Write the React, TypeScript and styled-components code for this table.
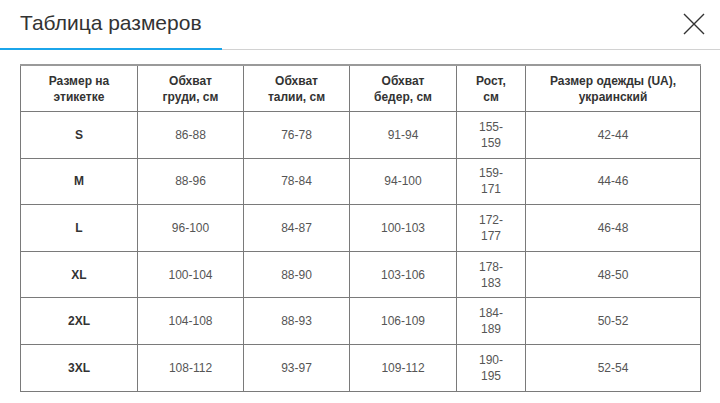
import React from "react";
import styled, { createGlobalStyle } from "styled-components";

const Global = createGlobalStyle`
  html, body { margin: 0; padding: 0; background: #fff; }
  body { font-family: "Liberation Sans", Arial, sans-serif; }
`;

const Page = styled.div`
  width: 720px;
  height: 403px;
  overflow: hidden;
  background: #fff;
`;

const Header = styled.div`
  display: flex;
  align-items: stretch;
  justify-content: space-between;
  height: 50px;
  border-bottom: 1px solid #d2d2d2;
  box-sizing: border-box;
`;

const Tab = styled.div`
  width: 222px;
  box-sizing: border-box;
  padding-left: 20px;
  padding-top: 11px;
  font-size: 21px;
  color: #333;
  border-bottom: 2px solid #1ba5ea;
  margin-bottom: -1px;
`;

const Close = styled.button`
  border: 0;
  background: transparent;
  padding: 0;
  margin: 13px 15px 0 0;
  width: 22px;
  height: 22px;
  cursor: pointer;
  display: flex;
`;

const Body = styled.div`
  padding: 14px 0 0 20px;
`;

const Table = styled.table`
  border-collapse: collapse;
  table-layout: fixed;
  width: 680px;
  border-top: 2px solid #9a9a9a;
`;

const Th = styled.th`
  border: 1.5px solid #7a7a7a;
  font-size: 12px;
  line-height: 16px;
  font-weight: bold;
  color: #333;
  text-align: center;
  vertical-align: middle;
  padding: 0 6px;
  height: 45px;
`;

const Td = styled.td<{ $bold?: boolean }>`
  border: 1.5px solid #7a7a7a;
  font-size: 12px;
  line-height: 16px;
  font-weight: ${(p) => (p.$bold ? "bold" : "normal")};
  color: ${(p) => (p.$bold ? "#333" : "#555")};
  text-align: center;
  vertical-align: middle;
  padding: 0 6px;
  height: 45.6px;
`;

const Narrow = styled.span`
  display: inline-block;
  max-width: 32px;
`;

const widths = [117, 106, 106, 107, 69, 175];
const headers = [
  ["Размер на", "этикетке"],
  ["Обхват", "груди, см"],
  ["Обхват", "талии, см"],
  ["Обхват", "бедер, см"],
  ["Рост,", "см"],
  ["Размер одежды (UA),", "украинский"],
];

const rows = [
  ["S", "86-88", "76-78", "91-94", "155-159", "42-44"],
  ["M", "88-96", "78-84", "94-100", "159-171", "44-46"],
  ["L", "96-100", "84-87", "100-103", "172-177", "46-48"],
  ["XL", "100-104", "88-90", "103-106", "178-183", "48-50"],
  ["2XL", "104-108", "88-93", "106-109", "184-189", "50-52"],
  ["3XL", "108-112", "93-97", "109-112", "190-195", "52-54"],
];

export default function App() {
  return (
    <Page>
      <Global />
      <Header>
        <Tab>Таблица размеров</Tab>
        <Close aria-label="close">
          <svg width="22" height="22" viewBox="0 0 22 22">
            <path d="M1 1L21 21M21 1L1 21" stroke="#333" strokeWidth="1.4" fill="none" />
          </svg>
        </Close>
      </Header>
      <Body>
        <Table>
          <colgroup>
            {widths.map((w, i) => (
              <col key={i} style={{ width: w }} />
            ))}
          </colgroup>
          <thead>
            <tr>
              {headers.map((h, i) => (
                <Th key={i}>
                  {h[0]}
                  <br />
                  {h[1]}
                </Th>
              ))}
            </tr>
          </thead>
          <tbody>
            {rows.map((r, ri) => (
              <tr key={ri}>
                {r.map((c, ci) => (
                  <Td key={ci} $bold={ci === 0}>
                    {ci === 4 ? <Narrow>{c}</Narrow> : c}
                  </Td>
                ))}
              </tr>
            ))}
          </tbody>
        </Table>
      </Body>
    </Page>
  );
}
